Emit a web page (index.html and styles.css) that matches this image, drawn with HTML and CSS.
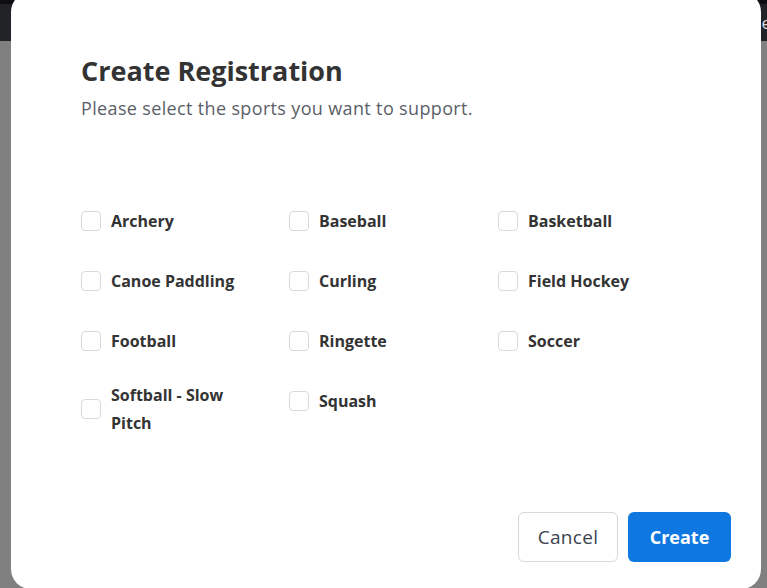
FILE: index.html
```html
<!DOCTYPE html>
<html>
<head>
<meta charset="utf-8">
<link rel="stylesheet" href="styles.css">
</head>
<body>
<div class="topbar"><span class="topbar-text">Profile</span></div>
<div class="backdrop"></div>
<div class="modal">
  <h1 class="title">Create Registration</h1>
  <p class="subtitle">Please select the sports you want to support.</p>
  <div class="sports">
    <label class="sport"><span class="box"></span><span class="name">Archery</span></label>
    <label class="sport"><span class="box"></span><span class="name">Baseball</span></label>
    <label class="sport"><span class="box"></span><span class="name">Basketball</span></label>
    <label class="sport"><span class="box"></span><span class="name">Canoe Paddling</span></label>
    <label class="sport"><span class="box"></span><span class="name">Curling</span></label>
    <label class="sport"><span class="box"></span><span class="name">Field Hockey</span></label>
    <label class="sport"><span class="box"></span><span class="name">Football</span></label>
    <label class="sport"><span class="box"></span><span class="name">Ringette</span></label>
    <label class="sport"><span class="box"></span><span class="name">Soccer</span></label>
    <label class="sport"><span class="box"></span><span class="name narrow">Softball - Slow Pitch</span></label>
    <label class="sport"><span class="box"></span><span class="name">Squash</span></label>
  </div>
  <div class="footer">
    <button class="btn btn-cancel">Cancel</button>
    <button class="btn btn-create">Create</button>
  </div>
</div>
</body>
</html>
```
FILE: styles.css
```css
html, body {
  margin: 0;
  padding: 0;
  height: 588px;
  overflow: hidden;
}
body {
  background: #808080;
  font-family: "Open Sans", "Liberation Sans", sans-serif;
  position: relative;
}
.topbar {
  height: 37px;
  border-top: 4px solid #0e0e10;
  background: #222327;
  display: flex;
  justify-content: flex-end;
  align-items: center;
}
.topbar-text {
  color: #d8dde4;
  font-size: 17px;
  margin-right: -4px;
}
.modal {
  position: absolute;
  left: 11px;
  top: -8px;
  width: 750px;
  height: 597px;
  box-sizing: border-box;
  background: #ffffff;
  border-radius: 20px;
  padding: 61px 30px 27px 70px;
  display: flex;
  flex-direction: column;
}
.title {
  margin: 0;
  font-size: 27px;
  line-height: 36px;
  font-weight: 700;
  color: #333333;
}
.subtitle {
  margin: 7px 0 0 0;
  font-size: 18px;
  letter-spacing: 0.35px;
  line-height: 24px;
  color: #5b6068;
}
.sports {
  margin-top: 81px;
  display: grid;
  grid-template-columns: 208px 209px 1fr;
  row-gap: 20px;
  align-items: start;
}
.sport {
  display: flex;
  align-items: center;
  min-height: 40px;
}
.box {
  width: 18px;
  height: 18px;
  border: 1px solid #d9d9d9;
  border-radius: 4px;
  flex: none;
  margin-right: 10px;
}
.name {
  font-size: 16px;
  font-weight: 700;
  line-height: 28px;
  color: #333333;
}
.narrow {
  max-width: 130px;
}
.footer {
  margin-top: auto;
  display: flex;
  justify-content: flex-end;
  gap: 10px;
}
.btn {
  font-family: "Open Sans", "Liberation Sans", sans-serif;
  font-size: 18px;
  border-radius: 6px;
  height: 50px;
  cursor: pointer;
}
.btn-cancel {
  width: 100px;
  background: #ffffff;
  border: 1px solid #d9d9d9;
  color: #3b4450;
  font-size: 19px;
  letter-spacing: 0.3px;
}
.btn-create {
  width: 103px;
  background: #0f78e0;
  border: none;
  color: #ffffff;
  font-weight: 700;
}
```
